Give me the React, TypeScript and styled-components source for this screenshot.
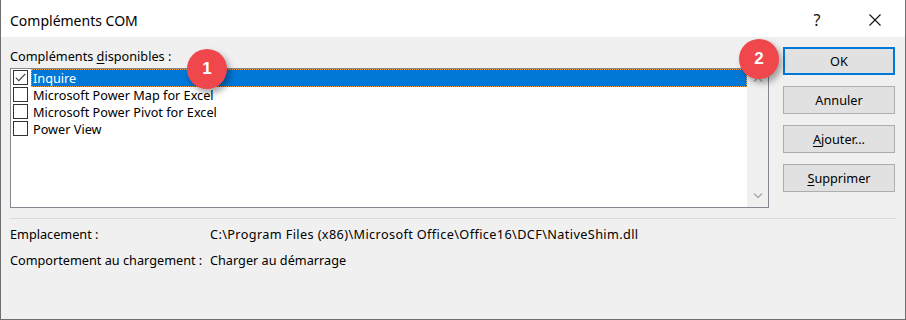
import React from 'react';
import styled, { createGlobalStyle } from 'styled-components';

const FONT = `"Noto Sans", "Liberation Sans", sans-serif`;

const Global = createGlobalStyle`
  html, body { margin: 0; padding: 0; background: #ffffff; }
  body { font-family: ${FONT}; }
`;

const Window = styled.div`
  position: relative;
  width: 906px;
  height: 320px;
  box-sizing: border-box;
  border-left: 1px solid #6f6f6f;
  border-right: 1px solid #6f6f6f;
  border-bottom: 1px solid #6f6f6f;
  background: #f0f0f0;
  display: flex;
  flex-direction: column;
  font-family: ${FONT};
  font-size: 12.7px;
  color: #000;
  overflow: hidden;
`;

const TitleBar = styled.div`
  height: 37px;
  flex: none;
  background: #ffffff;
  display: flex;
  align-items: center;
  padding-left: 9px;
`;

const Title = styled.div`
  flex: 1;
  font-size: 14px;
  color: #000;
  padding-top: 3px;
`;

const TitleButton = styled.div<{ $w: number }>`
  width: ${p => p.$w}px;
  height: 37px;
  padding-top: 3px;
  box-sizing: border-box;
  display: flex;
  align-items: center;
  justify-content: center;
  font-size: 16px;
  color: #111;
`;

const Body = styled.div`
  flex: 1;
  display: flex;
  flex-direction: column;
  padding: 10px 9px 0 9px;
`;

const MainRow = styled.div`
  display: flex;
  gap: 14px;
`;

const LeftCol = styled.div`
  width: 759px;
  display: flex;
  flex-direction: column;
`;

const Label = styled.div`
  height: 18px;
  line-height: 19px;
  margin-bottom: 3px;
`;

const ListBox = styled.div`
  height: 140px;
  box-sizing: border-box;
  border: 1px solid #828790;
  background: #ffffff;
  display: flex;
`;

const Items = styled.div`
  flex: 1;
  display: flex;
  flex-direction: column;
`;

const Row = styled.div`
  height: 17px;
  display: flex;
  align-items: flex-start;
  padding-left: 2px;
`;

const Check = styled.div`
  width: 15px;
  height: 15px;
  margin-top: 1px;
  box-sizing: border-box;
  border: 1px solid #333333;
  background: #ffffff;
  display: flex;
  align-items: center;
  justify-content: center;
  flex: none;
`;

const ItemText = styled.div<{ $sel?: boolean }>`
  flex: 1;
  height: 18px;
  margin-left: 3px;
  box-sizing: border-box;
  line-height: 15px;
  padding-top: 1px;
  padding-left: 1px;
  white-space: nowrap;
  background: ${p => (p.$sel ? '#0078d7' : 'transparent')};
  color: ${p => (p.$sel ? '#ffffff' : '#000000')};
  border: 1px ${p => (p.$sel ? 'dotted #f0a040' : 'solid transparent')};
`;

const ScrollBar = styled.div`
  width: 21px;
  flex: none;
  background: #f0f0f0;
  display: flex;
  flex-direction: column;
  justify-content: space-between;
  align-items: center;
  padding: 7px 0 8px;
`;

const RightCol = styled.div`
  width: 112px;
  display: flex;
  flex-direction: column;
  gap: 11px;
`;

const Button = styled.div<{ $default?: boolean }>`
  height: 28px;
  box-sizing: border-box;
  background: #e1e1e1;
  border: ${p => (p.$default ? '2px solid #0078d7' : '1px solid #adadad')};
  display: flex;
  align-items: center;
  justify-content: center;
  color: #000;
`;

const U = styled.span`
  text-decoration: underline;
  text-underline-offset: 2px;
`;

const Separator = styled.div`
  height: 1px;
  background: #dadada;
  margin: 10px 0 0 0;
  width: 886px;
`;

const InfoGrid = styled.div`
  display: grid;
  grid-template-columns: 200px 1fr;
  row-gap: 10px;
  margin-top: 7px;
  line-height: 16px;
`;

const PathValue = styled.div`
  letter-spacing: 0.38px;
`;

const Badge = styled.div<{ $x: number; $y: number }>`
  position: absolute;
  left: ${p => p.$x - 20}px;
  top: ${p => p.$y - 20}px;
  width: 40px;
  height: 40px;
  border-radius: 50%;
  background: #f0474c;
  color: #ffffff;
  font-weight: 700;
  font-size: 17px;
  display: flex;
  align-items: center;
  justify-content: center;
  box-shadow: 3px 4px 6px rgba(0, 0, 0, 0.35);
  font-family: "Liberation Sans", Arial, sans-serif;
`;

const Chevron = ({ up }: { up?: boolean }) => (
  <svg width="10" height="6" viewBox="0 0 10 6">
    <polyline
      points={up ? '1,5.5 5,1.5 9,5.5' : '1,0.5 5,4.5 9,0.5'}
      fill="none"
      stroke="#a8a8a8"
      strokeWidth="1.4"
    />
  </svg>
);

const items = [
  { name: 'Inquire', checked: true },
  { name: 'Microsoft Power Map for Excel', checked: false },
  { name: 'Microsoft Power Pivot for Excel', checked: false },
  { name: 'Power View', checked: false },
];

export default function App() {
  return (
    <>
      <Global />
      <Window>
        <TitleBar>
          <Title>Compléments COM</Title>
          <TitleButton $w={56}>?</TitleButton>
          <TitleButton $w={60}>
            <svg width="12" height="12" viewBox="0 0 12 12">
              <path d="M0.5 0.5 L11.5 11.5 M11.5 0.5 L0.5 11.5" stroke="#111" strokeWidth="1.1" />
            </svg>
          </TitleButton>
        </TitleBar>
        <Body>
          <MainRow>
            <LeftCol>
              <Label>
                Compléments <U>d</U>isponibles :
              </Label>
              <ListBox>
                <Items>
                  {items.map(it => (
                    <Row key={it.name}>
                      <Check>
                        {it.checked && (
                          <svg width="11" height="9" viewBox="0 0 11 9">
                            <polyline points="0.8,4.6 3.8,7.6 10.2,1" fill="none" stroke="#444" strokeWidth="1.1" />
                          </svg>
                        )}
                      </Check>
                      <ItemText $sel={it.checked}>{it.name}</ItemText>
                    </Row>
                  ))}
                </Items>
                <ScrollBar>
                  <Chevron up />
                  <Chevron />
                </ScrollBar>
              </ListBox>
            </LeftCol>
            <RightCol>
              <Button $default>OK</Button>
              <Button>Annuler</Button>
              <Button>
                <span><U>A</U>jouter...</span>
              </Button>
              <Button>
                <span><U>S</U>upprimer</span>
              </Button>
            </RightCol>
          </MainRow>
          <Separator />
          <InfoGrid>
            <div>Emplacement :</div>
            <PathValue>C:\Program Files (x86)\Microsoft Office\Office16\DCF\NativeShim.dll</PathValue>
            <div>Comportement au chargement :</div>
            <div>Charger au démarrage</div>
          </InfoGrid>
        </Body>
        <Badge $x={206} $y={69}>1</Badge>
        <Badge $x={758} $y={59}>2</Badge>
      </Window>
    </>
  );
}
